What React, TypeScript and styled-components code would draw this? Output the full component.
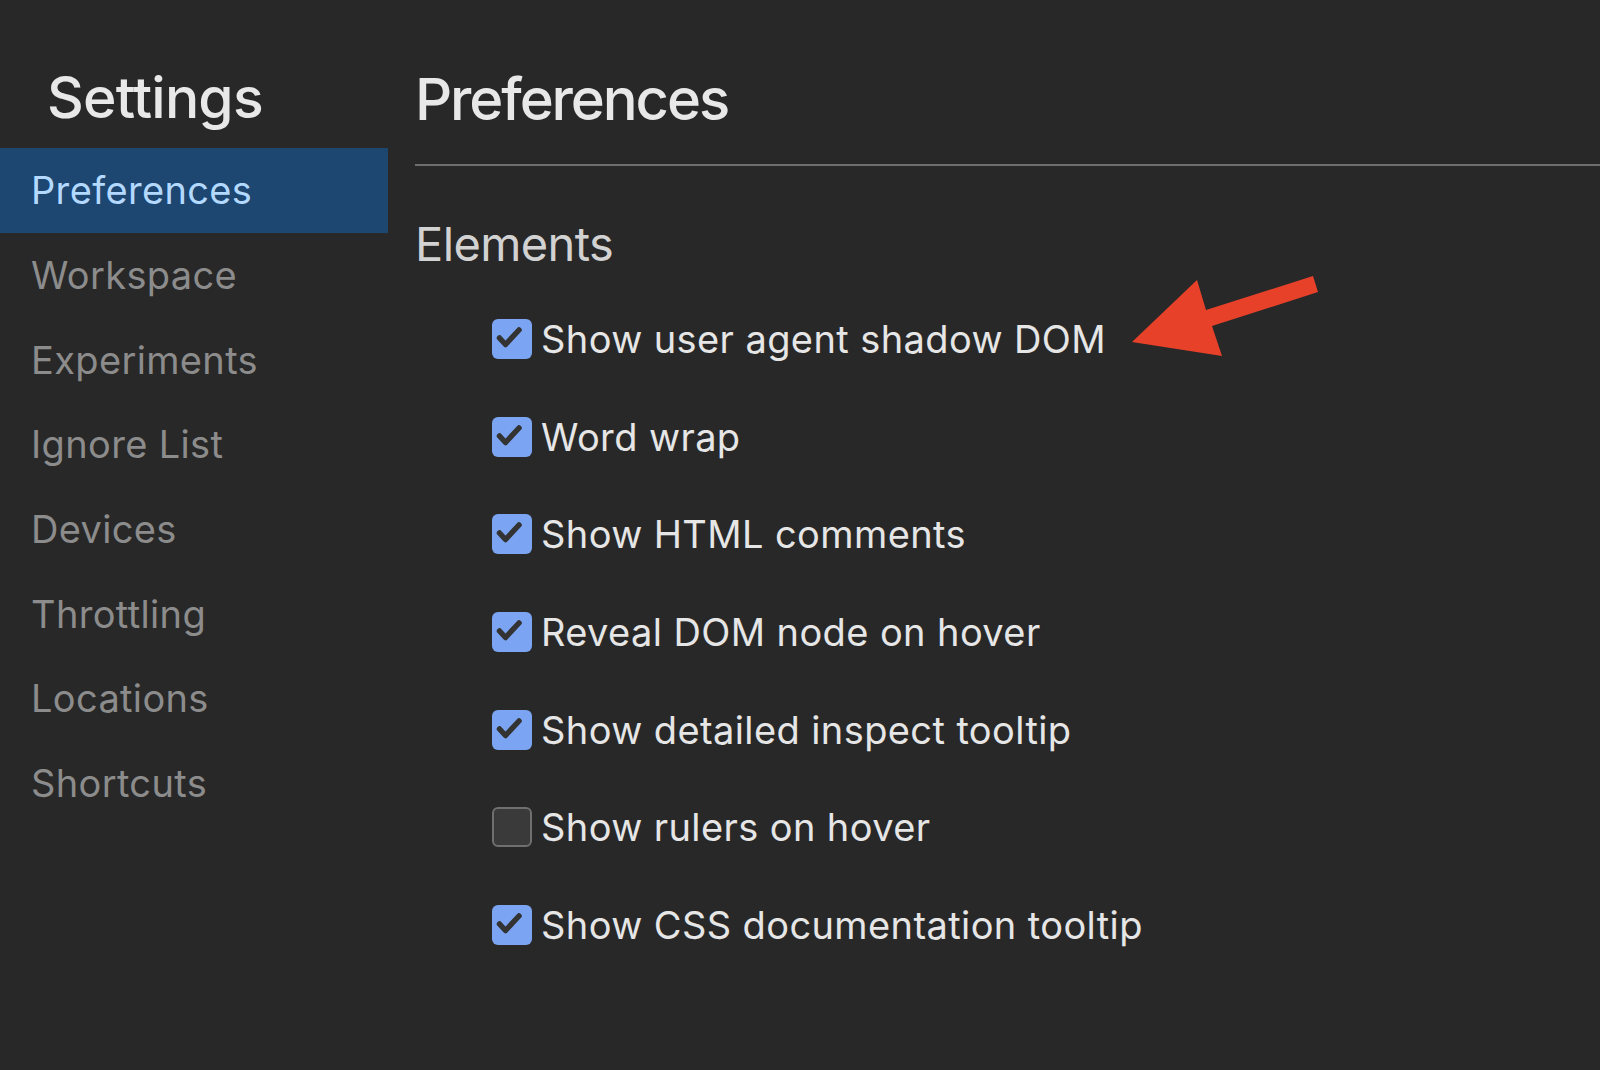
import React from "react";
import styled, { createGlobalStyle } from "styled-components";

const Global = createGlobalStyle`
  html, body {
    margin: 0;
    padding: 0;
    background: #282828;
  }
  body {
    font-family: Inter, "Noto Sans", "Liberation Sans", sans-serif;
    -webkit-font-smoothing: antialiased;
  }
`;

const Page = styled.div`
  position: relative;
  display: flex;
  width: 1600px;
  height: 1070px;
  background: #282828;
  overflow: hidden;
`;

const Sidebar = styled.nav`
  width: 388px;
  flex-shrink: 0;
  display: flex;
  flex-direction: column;
  padding-top: 63px;
`;

const SidebarTitle = styled.h1`
  margin: 0 0 16px 0;
  padding-left: 47px;
  font-size: 57px;
  line-height: 69px;
  font-weight: 500;
  color: #e8e8e8;
  letter-spacing: -0.8px;
`;

const NavItem = styled.div<{ $active?: boolean }>`
  height: 84.7px;
  padding-left: 31px;
  display: flex;
  align-items: center;
  font-size: 38px;
  line-height: 46px;
  font-weight: 400;
  letter-spacing: 0.35px;
  color: ${(p) => (p.$active ? "#b3d9ff" : "#8c8c8c")};
  background: ${(p) => (p.$active ? "#1d4670" : "transparent")};
`;

const Main = styled.main`
  flex: 1;
  display: flex;
  flex-direction: column;
  padding-left: 27px;
  padding-top: 64px;
`;

const MainTitle = styled.h2`
  margin: 0;
  font-size: 58px;
  line-height: 70px;
  font-weight: 500;
  color: #e8e8e8;
  letter-spacing: -2.1px;
`;

const Divider = styled.hr`
  margin: 30px 0 0 0;
  border: none;
  height: 2px;
  background: #6e6e6e;
`;

const SectionTitle = styled.h3`
  margin: 49px 0 0 0;
  font-size: 47px;
  line-height: 57px;
  font-weight: 400;
  color: #d2d2d2;
  letter-spacing: -0.6px;
`;

const OptionList = styled.div`
  display: flex;
  flex-direction: column;
  gap: 51.7px;
  margin-top: 44px;
  padding-left: 77px;
`;

const Option = styled.label`
  display: flex;
  align-items: center;
  gap: 9px;
  height: 46px;
  font-size: 38px;
  line-height: 46px;
  letter-spacing: 0.4px;
  color: #e6e6e6;
`;

const Box = styled.span<{ $checked: boolean }>`
  width: 40px;
  height: 40px;
  box-sizing: border-box;
  border-radius: 6px;
  flex-shrink: 0;
  display: flex;
  background: ${(p) => (p.$checked ? "#7ba5f3" : "#3a3a3a")};
  border: ${(p) => (p.$checked ? "none" : "2.5px solid #6f6f6f")};
`;

const ArrowLayer = styled.svg`
  position: absolute;
  left: 0;
  top: 0;
  pointer-events: none;
`;

function Check({ checked }: { checked: boolean }) {
  return (
    <Box $checked={checked}>
      {checked && (
        <svg width="40" height="40" viewBox="0 0 40 40">
          <path
            d="M7.5 19 L13.5 25.5 L27 11"
            fill="none"
            stroke="#333333"
            strokeWidth="5.5"
            strokeLinecap="round"
            strokeLinejoin="round"
          />
        </svg>
      )}
    </Box>
  );
}

const navItems = [
  "Preferences",
  "Workspace",
  "Experiments",
  "Ignore List",
  "Devices",
  "Throttling",
  "Locations",
  "Shortcuts",
];

const options: { label: string; checked: boolean }[] = [
  { label: "Show user agent shadow DOM", checked: true },
  { label: "Word wrap", checked: true },
  { label: "Show HTML comments", checked: true },
  { label: "Reveal DOM node on hover", checked: true },
  { label: "Show detailed inspect tooltip", checked: true },
  { label: "Show rulers on hover", checked: false },
  { label: "Show CSS documentation tooltip", checked: true },
];

export default function App() {
  return (
    <>
      <Global />
      <Page>
        <Sidebar>
          <SidebarTitle>Settings</SidebarTitle>
          {navItems.map((n, i) => (
            <NavItem key={n} $active={i === 0}>
              {n}
            </NavItem>
          ))}
        </Sidebar>
        <Main>
          <MainTitle>Preferences</MainTitle>
          <Divider />
          <SectionTitle>Elements</SectionTitle>
          <OptionList>
            {options.map((o) => (
              <Option key={o.label}>
                <Check checked={o.checked} />
                {o.label}
              </Option>
            ))}
          </OptionList>
        </Main>
        <ArrowLayer width="1600" height="1070" viewBox="0 0 1600 1070">
          <polygon
            points="1132,342 1197,280 1206,310 1313,276 1318,292 1212,326 1222,356"
            fill="#e8412a"
          />
        </ArrowLayer>
      </Page>
    </>
  );
}
